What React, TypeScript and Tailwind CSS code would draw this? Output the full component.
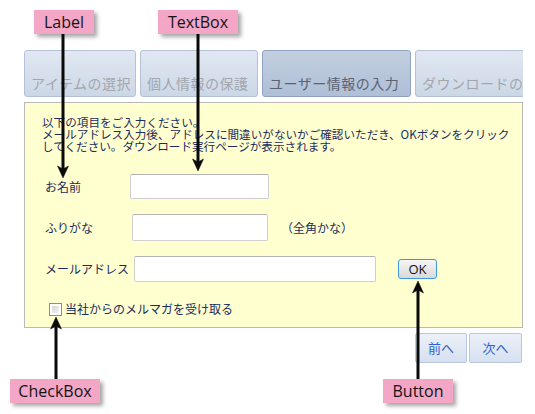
import React from "react";

const jp = { fontFamily: '"Noto Sans CJK JP", "Noto Sans", sans-serif' };
const latin = { fontFamily: '"Open Sans", "Noto Sans", sans-serif' };

function Callout({ text, className }: { text: string; className: string }) {
  return (
    <div
      className={`h-[24px] bg-[#f3a6c5] text-[#141414] text-[16px] leading-[24px] text-center shadow-[3px_3px_4px_rgba(0,0,0,0.35)] ${className}`}
      style={latin}
    >
      {text}
    </div>
  );
}

function Tab({ text, w, active }: { text: string; w: string; active?: boolean }) {
  return (
    <div
      className={`${w} shrink-0 h-[47px] rounded-[3px] border pt-[23px] px-[6px] overflow-hidden whitespace-nowrap text-[14px] leading-[18px] tracking-[0.5px] ${
        active
          ? "border-[#8ea3c2] bg-gradient-to-b from-[#c3cfe0] to-[#aebfd6] text-[#5b6273]"
          : "border-[#b3c2d8] bg-gradient-to-b from-[#e1e8f2] to-[#ccd7e6] text-[#a3a6ad]"
      }`}
      style={jp}
    >
      {text}
    </div>
  );
}

function Input({ w, h }: { w: string; h: string }) {
  return (
    <div
      className={`${w} ${h} shrink-0 bg-white rounded-[2px] border border-[#cfcfcf] border-t-[#b3b3b3]`}
    />
  );
}

export default function App() {
  return (
    <div className="relative w-[535px] h-[414px] bg-white overflow-hidden">
      {/* top callouts */}
      <div className="flex h-[50px] pt-[10px]">
        <Callout text="Label" className="ml-[34px] w-[60px]" />
        <Callout text="TextBox" className="ml-[64px] w-[80px]" />
      </div>

      {/* tabs */}
      <div className="ml-[24px] w-[499px] flex gap-[4px] overflow-hidden">
        <Tab text="アイテムの選択" w="w-[112px]" />
        <Tab text="個人情報の保護" w="w-[118px]" />
        <Tab text="ユーザー情報の入力" w="w-[149px]" active />
        <Tab text="ダウンロードの実行" w="w-[110px]" />
      </div>

      {/* panel */}
      <div
        className="mt-[5px] ml-[24px] w-[499px] h-[226px] border border-[#b9b9b9] bg-[#ffffcf] text-[#1b2c5c]"
        style={jp}
      >
        <div className="pt-[13px] pl-[17px] text-[11.6px] leading-[12px] whitespace-nowrap">
          <div>以下の項目をご入力ください。</div>
          <div>メールアドレス入力後、アドレスに間違いがないかご確認いただき、OKボタンをクリック</div>
          <div>してください。ダウンロード実行ページが表示されます。</div>
        </div>

        <div className="mt-[22px] flex items-center text-[12px]">
          <div className="ml-[20px] w-[85px]">お名前</div>
          <Input w="w-[139px]" h="h-[25px]" />
        </div>

        <div className="mt-[15px] flex items-center text-[12px]">
          <div className="ml-[20px] w-[87px]">ふりがな</div>
          <Input w="w-[136px]" h="h-[27px]" />
          <div className="ml-[13px]">（全角かな）</div>
        </div>

        <div className="mt-[15px] flex items-center text-[12px]">
          <div className="ml-[20px] w-[89px]">メールアドレス</div>
          <Input w="w-[242px]" h="h-[26px]" />
          <button
            className="ml-[22px] w-[39px] h-[20px] rounded-[3px] border border-[#3d9ad6] bg-gradient-to-b from-[#f6f6f6] to-[#d9d9d9] text-[13px] leading-[18px] text-[#111]"
            style={latin}
          >
            OK
          </button>
        </div>

        <div className="mt-[18px] flex items-center text-[12px]">
          <div className="ml-[24px] w-[13px] h-[13px] border border-[#8e8e8e] bg-white p-[2px]">
            <div className="w-full h-full bg-gradient-to-br from-[#d6d6d6] to-[#f3f3f3]" />
          </div>
          <div className="ml-[3px]">当社からのメルマガを受け取る</div>
        </div>
      </div>

      {/* nav buttons */}
      <div className="mt-[5px] ml-[415px] flex gap-[2px]" style={jp}>
        <button className="w-[52px] h-[30px] rounded-[2px] border border-[#b9c8de] bg-gradient-to-b from-[#ecf1f9] to-[#d6e0f0] text-[13px] text-[#2f60cf]">
          前へ
        </button>
        <button className="w-[53px] h-[30px] rounded-[2px] border border-[#b9c8de] bg-gradient-to-b from-[#ecf1f9] to-[#d6e0f0] text-[13px] text-[#2f60cf]">
          次へ
        </button>
      </div>

      {/* bottom callouts */}
      <div className="mt-[16px] flex">
        <Callout text="CheckBox" className="ml-[10px] w-[90px]" />
        <Callout text="Button" className="ml-[283px] w-[70px]" />
      </div>

      {/* arrows overlay */}
      <svg
        className="absolute inset-0 pointer-events-none"
        width="535"
        height="414"
        viewBox="0 0 535 414"
      >
        <g fill="#0a0a0a" stroke="#0a0a0a">
          <line x1="63" y1="34" x2="63" y2="170" strokeWidth="3" />
          <polygon points="63,178 57.5,166 63,169 68.5,166" strokeWidth="0.5" />
          <line x1="198" y1="34" x2="198" y2="163" strokeWidth="3" />
          <polygon points="198,171 192.5,159 198,162 203.5,159" strokeWidth="0.5" />
          <line x1="56" y1="379" x2="56" y2="325" strokeWidth="3" />
          <polygon points="56,317 50.5,329 56,326 61.5,329" strokeWidth="0.5" />
          <line x1="418" y1="379" x2="418" y2="289" strokeWidth="3" />
          <polygon points="418,281 412.5,293 418,290 423.5,293" strokeWidth="0.5" />
        </g>
      </svg>
    </div>
  );
}
